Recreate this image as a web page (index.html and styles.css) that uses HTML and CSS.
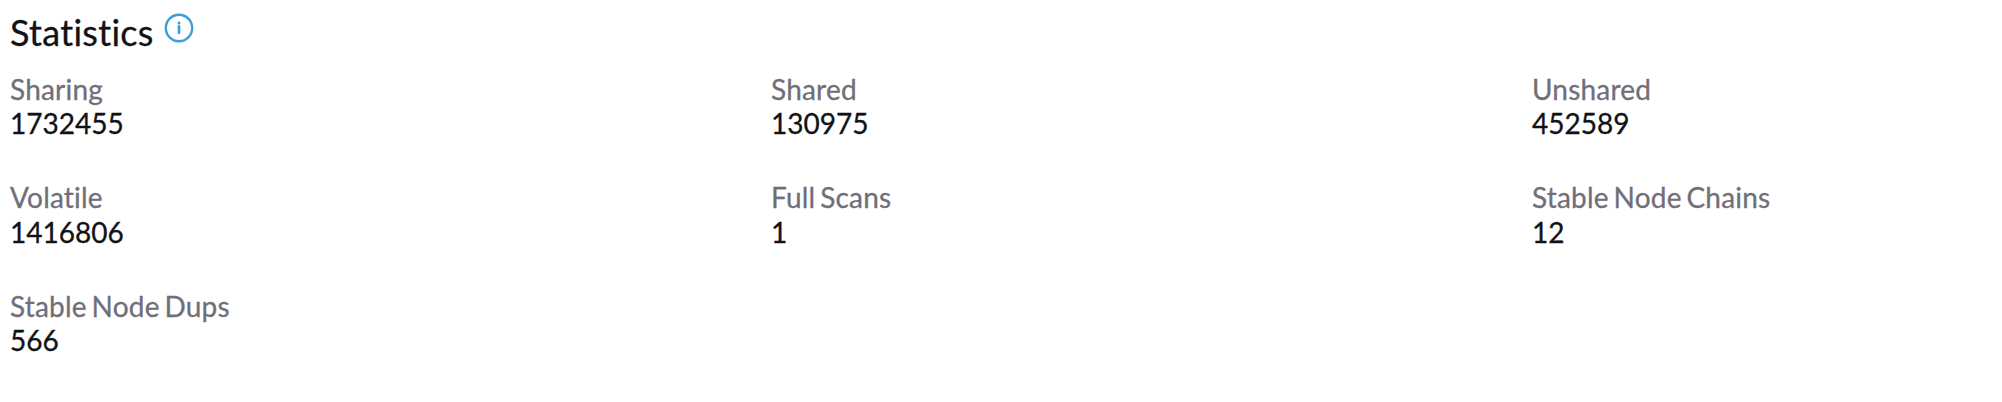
FILE: index.html
```html
<!DOCTYPE html>
<html lang="en">
<head>
<meta charset="utf-8">
<title>Statistics</title>
<link rel="stylesheet" href="styles.css">
</head>
<body>
<section class="stats">
  <header class="stats-header">
    <h2 class="stats-title">Statistics</h2>
    <svg class="info-icon" viewBox="0 0 30 30" fill="none" stroke="#3e9cda" stroke-width="2.4" aria-label="Information">
      <circle cx="15" cy="15" r="13.2"/>
      <path d="M15 13.4v6.4" stroke-width="2.7" stroke-linecap="round"/>
      <circle cx="15" cy="9.9" r="1.5" fill="#3e9cda" stroke="none"/>
    </svg>
  </header>
  <dl class="stats-grid">
    <div class="stat"><dt>Sharing</dt><dd>1732455</dd></div>
    <div class="stat"><dt>Shared</dt><dd>130975</dd></div>
    <div class="stat"><dt>Unshared</dt><dd>452589</dd></div>
    <div class="stat"><dt>Volatile</dt><dd>1416806</dd></div>
    <div class="stat"><dt>Full Scans</dt><dd>1</dd></div>
    <div class="stat"><dt>Stable Node Chains</dt><dd>12</dd></div>
    <div class="stat"><dt>Stable Node Dups</dt><dd>566</dd></div>
  </dl>
</section>
</body>
</html>
```
FILE: styles.css
```css
body {
  margin: 0;
  background: #fff;
  color: #111216;
  font-family: Lato, sans-serif;
  font-size: 28px;
  font-variant-ligatures: none;
  -webkit-text-stroke: 0.3px currentColor;
}

.stats {
  padding: 10px;
}

.stats-header {
  display: flex;
  align-items: flex-start;
  gap: 10px;
  height: 62px;
}

.stats-title {
  margin: 0;
  font-size: 36px;
  font-weight: 400;
  line-height: 44px;
  letter-spacing: 0.3px;
}

.info-icon {
  width: 30px;
  height: 30px;
  margin-top: 3px;
}

.stats-grid {
  display: grid;
  grid-template-columns: 761px 761px 1fr;
  grid-auto-rows: 108.3px;
  margin: 0;
}

.stat {
  line-height: 34px;
}

.stat dt {
  color: #706f79;
  letter-spacing: 0.2px;
  word-spacing: -2.6px;
}

.stat dd {
  margin: 0.3px 0 0;
}
```
